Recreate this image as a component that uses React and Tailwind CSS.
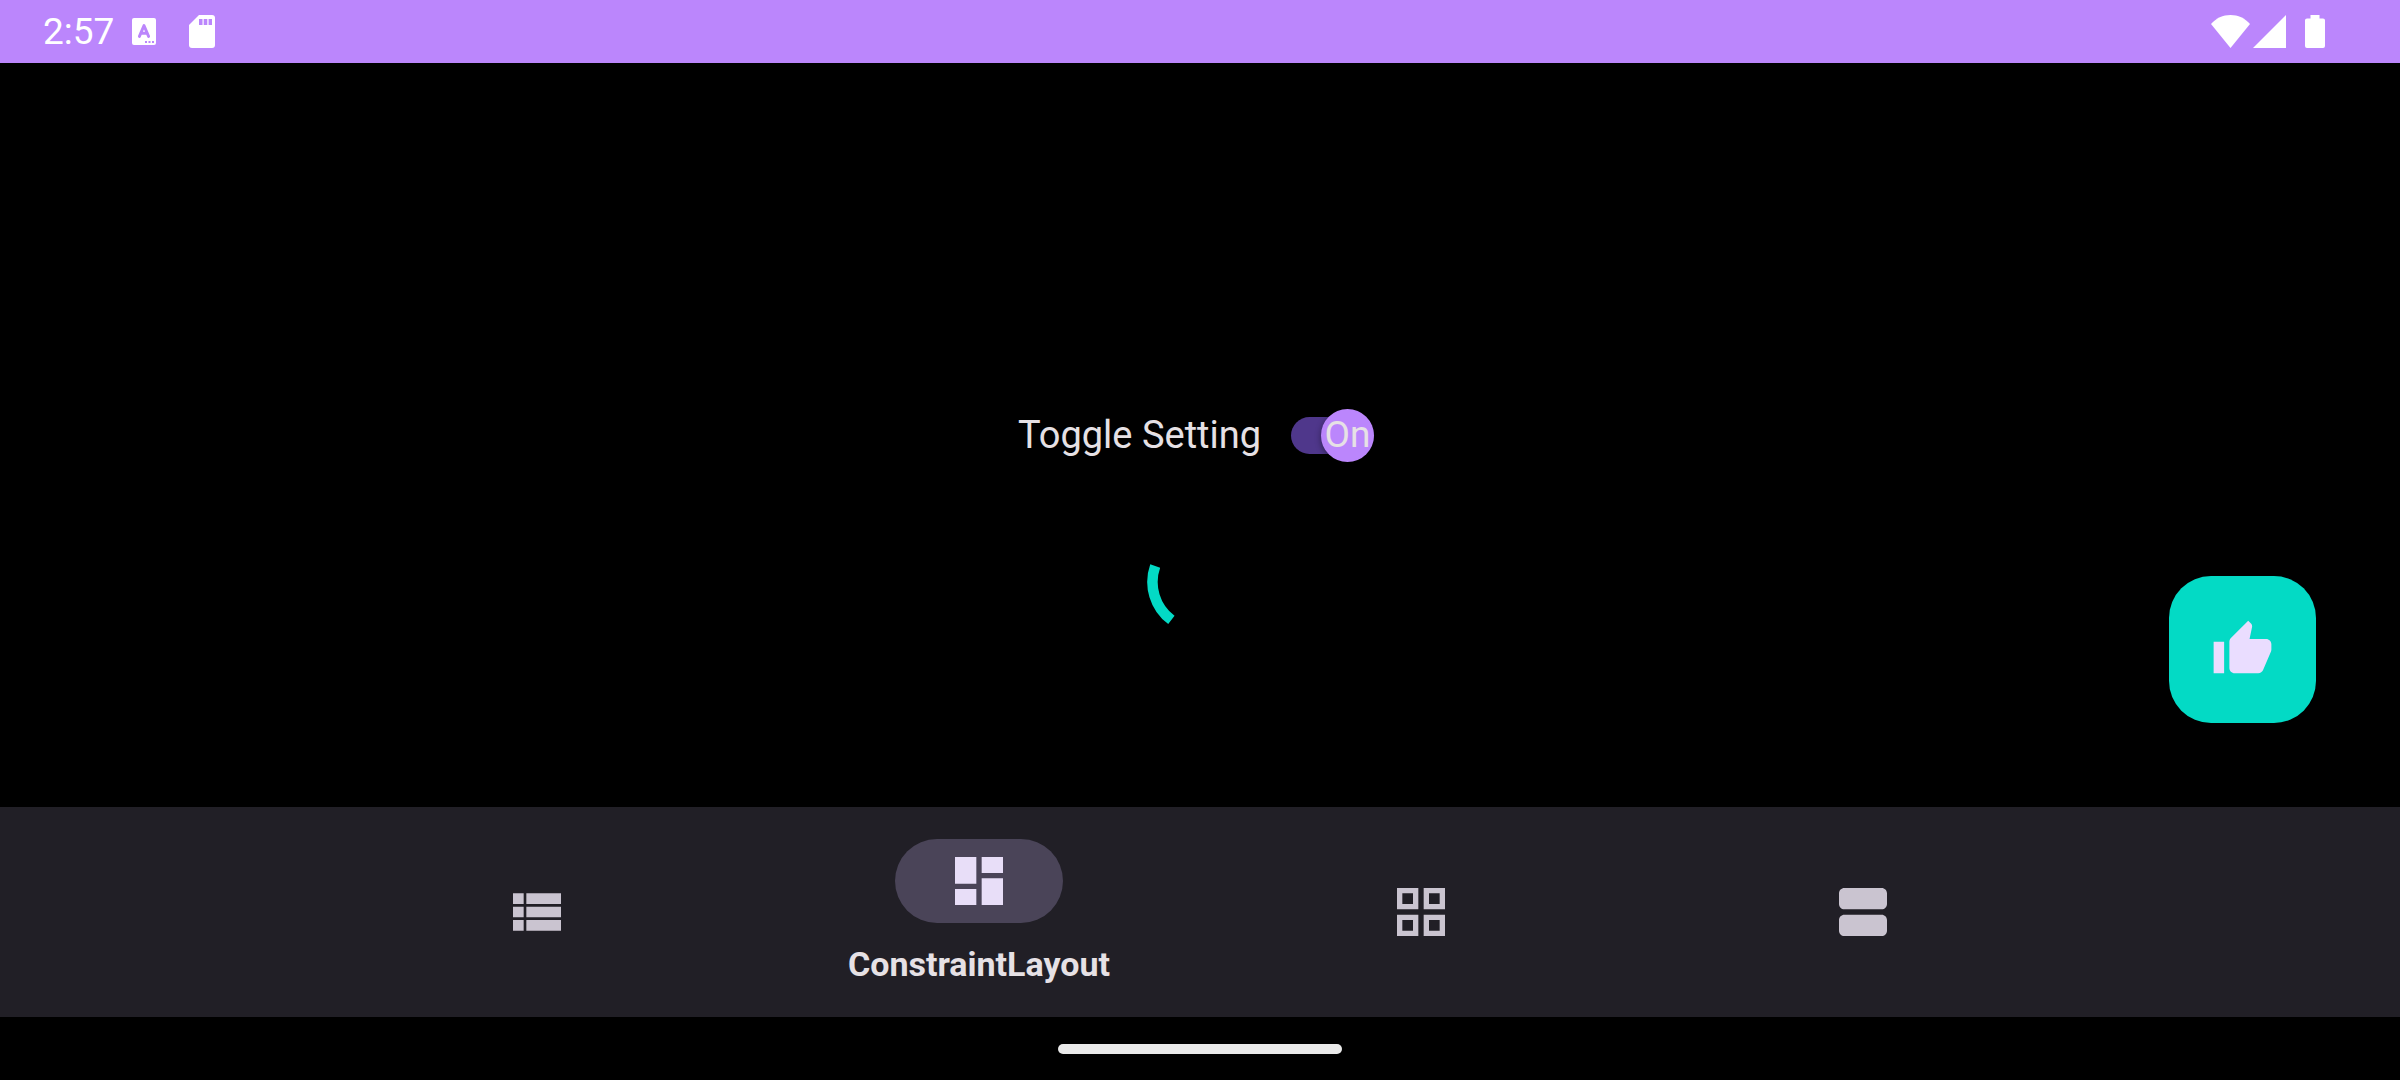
import { useState } from "react";

const ListIcon = () => (
  <svg className="size-16" viewBox="0 0 24 24" fill="currentColor" aria-hidden="true">
    <path d="M3 14h4v-4H3v4zm0 5h4v-4H3v4zM3 9h4V5H3v4zm5 5h13v-4H8v4zm0 5h13v-4H8v4zM8 5v4h13V5H8z" />
  </svg>
);

const DashboardIcon = () => (
  <svg className="size-16" viewBox="0 0 24 24" fill="currentColor" aria-hidden="true">
    <path d="M3 13h8V3H3v10zm0 8h8v-6H3v6zm10 0h8V11h-8v10zm0-18v6h8V3h-8z" />
  </svg>
);

const GridIcon = () => (
  <svg className="size-16" viewBox="0 0 24 24" fill="currentColor" fillRule="evenodd" aria-hidden="true">
    <path d="M3 3v8h8V3H3zm6 6H5V5h4v4zm-6 4v8h8v-8H3zm6 6H5v-4h4v4zm4-16v8h8V3h-8zm6 6h-4V5h4v4zm-6 4v8h8v-8h-8zm6 6h-4v-4h4v4z" />
  </svg>
);

const AgendaIcon = () => (
  <svg className="size-16" viewBox="0 0 24 24" fill="currentColor" aria-hidden="true">
    <path d="M19 13H5c-1.1 0-2 .9-2 2v4c0 1.1.9 2 2 2h14c1.1 0 2-.9 2-2v-4c0-1.1-.9-2-2-2zm0-10H5c-1.1 0-2 .9-2 2v4c0 1.1.9 2 2 2h14c1.1 0 2-.9 2-2V5c0-1.1-.9-2-2-2z" />
  </svg>
);

const tabs = [
  { label: "ListView", Icon: ListIcon },
  { label: "ConstraintLayout", Icon: DashboardIcon },
  { label: "GridView", Icon: GridIcon },
  { label: "CardView", Icon: AgendaIcon },
];

function StatusBar() {
  return (
    <header className="flex h-[63px] items-center justify-between bg-[#bb86fc] pr-[75px] pl-[43px] text-white">
      <div className="flex items-center">
        <time className="text-[37px] leading-none">2:57</time>
        <svg className="ml-[18px] h-[27px] w-6" viewBox="0 0 24 27" aria-hidden="true">
          <rect width="24" height="27" rx="2" fill="#fff" />
          <path d="M7.4 18.4 12 7.6l4.6 10.8M9 15.2h6" fill="none" stroke="#bb86fc" strokeWidth="2.9" strokeLinejoin="round" strokeLinecap="round" />
          <path d="M13 23h2v2h-2zM16.500 23h2v2h-2zM20 23h2v2h-2z" fill="#bb86fc" />
        </svg>
        <svg className="ml-[33px] h-[33px] w-[26px]" viewBox="0 0 26 33" aria-hidden="true">
          <path d="M10 0h13a3 3 0 0 1 3 3v27a3 3 0 0 1-3 3H3a3 3 0 0 1-3-3V10z" fill="#fff" />
          <path d="M10 4h3.500v6H10zM14.700 4h3.600v6h-3.600zM19.600 4h3.400v6h-3.400z" fill="#bb86fc" />
        </svg>
      </div>
      <div className="flex items-center">
        <svg className="h-[33px] w-[39px]" viewBox="0 0 39 33" fill="currentColor" aria-hidden="true">
          <path d="M19.500 33 0 9C5 3.200 12 0 19.500 0S34 3.200 39 9z" />
        </svg>
        <svg className="ml-[3px] size-[33px]" viewBox="0 0 33 33" fill="currentColor" aria-hidden="true">
          <path d="M0 33 33 0v33z" />
        </svg>
        <svg className="ml-[19px] h-[33px] w-5" viewBox="0 0 20 34" fill="currentColor" preserveAspectRatio="none" aria-hidden="true">
          <path d="M5.500 0h9v3.500H18a2 2 0 0 1 2 2V32a2 2 0 0 1-2 2H2a2 2 0 0 1-2-2V5.500a2 2 0 0 1 2-2h3.500z" />
        </svg>
      </div>
    </header>
  );
}

function ToggleSetting() {
  const [on, setOn] = useState(true);
  return (
    <label className="flex cursor-pointer items-center gap-[30px] pr-2 text-[38px] leading-[54px]">
      Toggle Setting
      <span className="relative flex h-[53px] w-[83px] items-center">
        <input
          type="checkbox"
          role="switch"
          checked={on}
          onChange={(e) => setOn(e.target.checked)}
          className="peer h-[37px] w-full cursor-pointer appearance-none rounded-full bg-[#4a4458] checked:bg-[#4f378b]"
        />
        <span className="pointer-events-none absolute left-0 flex size-[53px] items-center justify-center rounded-full bg-[#938f99] text-[37px] shadow-[0_2px_6px_rgba(0,0,0,0.4)] peer-checked:right-0 peer-checked:left-auto peer-checked:bg-[#bb86fc]">
          {on ? "On" : "Off"}
        </span>
      </span>
    </label>
  );
}

export default function App() {
  const [active, setActive] = useState(1);
  return (
    <div className="flex min-h-screen flex-col bg-black font-[Roboto,sans-serif] text-[#e6e1e5]">
      <StatusBar />
      <main className="relative grid flex-1 grid-rows-[1fr_auto_1fr] justify-items-center">
        <div className="row-start-2">
          <ToggleSetting />
        </div>
        <svg role="progressbar" aria-label="Loading" className="row-start-3 mt-[67px] size-[106px]" viewBox="0 0 106 106">
          <path d="M8.200 37.100A47.500 47.500 0 0 0 24.400 90.900" fill="none" stroke="#03dac5" strokeWidth="10.500" />
        </svg>
        <button
          type="button"
          aria-label="Like"
          className="absolute right-[84px] bottom-[84px] flex size-[147px] cursor-pointer items-center justify-center rounded-[42px] bg-[#03dac5] text-[#eaddff]"
        >
          <svg className="size-[63px]" viewBox="0 0 24 24" fill="currentColor" aria-hidden="true">
            <path d="M1 21h4V9H1v12zm22-11c0-1.100-.9-2-2-2h-6.310l.95-4.570.03-.32c0-.41-.17-.79-.44-1.060L14.170 1 7.590 7.590C7.220 7.950 7 8.450 7 9v10c0 1.100.9 2 2 2h9c.83 0 1.540-.5 1.840-1.220l3.020-7.050c.09-.23.14-.47.14-.73v-2z" />
          </svg>
        </button>
      </main>
      <nav className="flex h-[210px] justify-center bg-[#211f26]">
        <div className="grid w-full max-w-[1768px] grid-cols-4">
          {tabs.map(({ label, Icon }, i) =>
            i === active ? (
              <button key={label} type="button" aria-current="page" className="flex flex-col items-center pt-8">
                <span className="flex h-[84px] w-[168px] items-center justify-center rounded-full bg-[#4a4458] text-[#e8def8]">
                  <Icon />
                </span>
                <span className="mt-5 text-[34px] leading-[42px] font-bold">{label}</span>
              </button>
            ) : (
              <button
                key={label}
                type="button"
                aria-label={label}
                onClick={() => setActive(i)}
                className="flex cursor-pointer items-center justify-center text-[#cac4d0]"
              >
                <Icon />
              </button>
            )
          )}
        </div>
      </nav>
      <footer className="flex h-[63px] items-center justify-center">
        <div className="h-[10px] w-[284px] rounded-full bg-[#eaeaea]" />
      </footer>
    </div>
  );
}
